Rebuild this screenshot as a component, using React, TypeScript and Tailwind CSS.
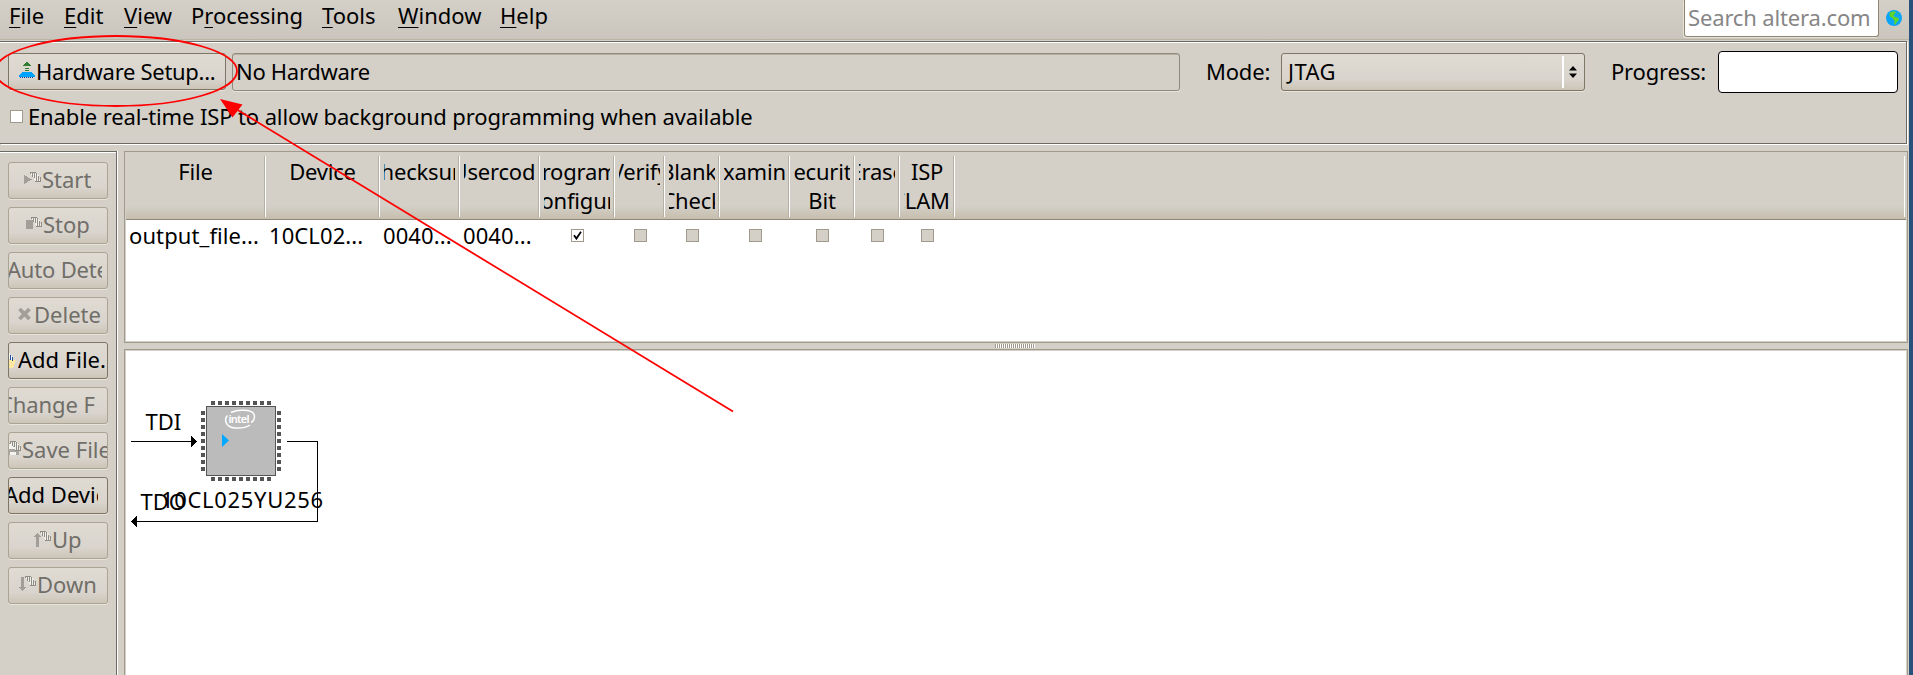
import type { ReactNode } from "react";

const face =
  "bg-linear-to-b from-[#dfdbd2] via-[#d9d4cd] via-70% to-[#ccc5b7]";

function Menu({ k, pre = "", post, w }: { k: string; pre?: string; post: string; w: string }) {
  return (
    <div className={`${w} shrink-0 whitespace-pre`}>
      {pre}
      <span className="underline decoration-1 underline-offset-3">{k}</span>
      {post}
    </div>
  );
}

const fingers = [
  [0, 0, 2],
  [1, 0, 1],
  [2, 1, 5],
  [4, 0, 6],
  [6, 1, 9],
  [8, 4, 9],
  [10, 5, 10],
];

function Hand({ x, y, color = "#8f8d86" }: { x: number; y: number; color?: string }) {
  return (
    <g transform={`translate(${x} ${y})`}>
      <path d="M0 0h6l3 4l1 6H5L4 5L0 2z" fill="#f1efea" />
      {fingers.map(([fx, a, b]) => (
        <rect key={fx} x={fx} y={a} width="1" height={b - a} fill={color} />
      ))}
      <rect x="5" y="9" width="6" height="1" fill={color} />
      <rect x="0" y="0" width="6" height="1" fill={color} />
    </g>
  );
}

function SideIcon({ w, children }: { w: number; children: ReactNode }) {
  return (
    <svg className="shrink-0" width={w} height="17" shapeRendering="crispEdges">
      {children}
    </svg>
  );
}

function SideButton({
  on = false,
  inner,
  icon,
  label,
  text = "",
}: {
  on?: boolean;
  inner: string;
  icon?: ReactNode;
  label: string;
  text?: string;
}) {
  return (
    <div
      className={`flex h-[37px] w-[100px] shrink-0 items-center overflow-hidden rounded-[3px] border pb-[3px] whitespace-nowrap ${face} ${
        on ? "border-[#7d7666] text-black" : "border-[#aaa495] text-[#706e69]"
      } shadow-[0_1px_0_#e8e4da]`}
    >
      <div className={`flex shrink-0 items-center ${inner}`}>
        {icon}
        <span className={`overflow-hidden ${text}`}>{label}</span>
      </div>
    </div>
  );
}

function Check({ state }: { state: "on" | "off" | "disabled" }) {
  return (
    <div
      className={`flex size-[13px] items-center justify-center border border-[#a09a8c] ${
        state === "disabled" ? "bg-[#d4d0c8]" : "bg-white"
      }`}
    >
      {state === "on" && (
        <svg width="9" height="9" viewBox="0 0 9 9" className="shrink-0">
          <path d="M1 4.2L3.4 7.6L8 0.8" fill="none" stroke="#000" strokeWidth="1.8" />
        </svg>
      )}
    </div>
  );
}

const columns: { w: string; lines: string[]; cell: string }[] = [
  { w: "w-[140px]", lines: ["File"], cell: "output_file..." },
  { w: "w-[114px]", lines: ["Device"], cell: "10CL02..." },
  { w: "w-[80px]", lines: ["Checksum"], cell: "0040..." },
  { w: "w-[80px]", lines: ["Usercode"], cell: "0040..." },
  { w: "w-[75px]", lines: ["Program/", "Configure"], cell: "on" },
  { w: "w-[50px]", lines: ["Verify"], cell: "disabled" },
  { w: "w-[55px]", lines: ["Blank-", "Check"], cell: "disabled" },
  { w: "w-[70px]", lines: ["Examine"], cell: "disabled" },
  { w: "w-[65px]", lines: ["Security", "Bit"], cell: "disabled" },
  { w: "w-[45px]", lines: ["Erase"], cell: "disabled" },
  { w: "w-[55px]", lines: ["ISP", "CLAMP"], cell: "disabled" },
];

const pins = [0, 7, 14, 21, 28, 35, 42, 49, 56];

function Chain() {
  return (
    <svg
      className="absolute left-0 top-0 font-['Noto_Sans',sans-serif]"
      width="220"
      height="200"
      viewBox="126 351 220 200"
      fontSize="22"
    >
      <g shapeRendering="crispEdges">
        <path d="M131 441h60v1h-60zM287 441h31v81H137v-1h180v-79h-30z" fill="#000" />
        <path d="M191 436l6 5.5l-6 5.5zM137 516l-6 5.5l6 5.5z" fill="#000" />
        <rect x="206.500" y="406.500" width="69" height="69" fill="#bbb" stroke="#555" />
        {pins.map((p) => (
          <g key={p} fill="#555">
            <rect x={211 + p} y="401" width="4" height="4" />
            <rect x={211 + p} y="477" width="4" height="4" />
            <rect x="201" y={411 + p} width="4" height="4" />
            <rect x="277" y={411 + p} width="4" height="4" />
          </g>
        ))}
      </g>
      <path d="M222 434l7 6.500l-7 6.500z" fill="#00a8ff" />
      <path
        d="M231 412.500C238 409 254 409 254.500 416C254.500 420 252 422 251 422.500M227.500 415.500C224 419 225 427 235 428C242 428.500 247 427 250 425"
        fill="none"
        stroke="#fff"
        strokeWidth="1.500"
      />
      <text x="228.500" y="423" fontSize="11" fontWeight="600" fill="#fff" textLength="21">
        intel
      </text>
      <text x="145.500" y="430">TDI</text>
      <text x="140.500" y="510">TDO</text>
      <text x="161" y="508" textLength="162">10CL025YU256</text>
    </svg>
  );
}

export default function App() {
  return (
    <div className="relative flex h-[675px] w-[1913px] overflow-hidden bg-[#d4d0c8] font-['Noto_Sans',sans-serif] text-[22px] leading-[28px] text-black">
      <div className="flex w-[1909px] flex-col">
        <div className="flex h-10 shrink-0 border-b border-[#b9b4a4] bg-linear-to-b from-[#d4d0c8] to-[#cac5bd] pl-[9px]">
          <div className="flex pt-px">
            <Menu k="F" post="ile" w="w-[55px]" />
            <Menu k="E" post="dit" w="w-[60px]" />
            <Menu k="V" post="iew" w="w-[67px]" />
            <Menu pre="P" k="r" post="ocessing" w="w-[131px]" />
            <Menu k="T" post="ools" w="w-[76px]" />
            <Menu k="W" post="indow" w="w-[102px]" />
            <Menu k="H" post="elp" w="w-[60px]" />
          </div>
          <div className="ml-auto flex h-[37px] w-[195px] items-start rounded-b-[3px] border border-t-0 border-[#8f8672] bg-white pt-[3px] pl-[3px] tracking-[-0.15px] text-[#868686] shadow-[-1px_1px_0_#e6e2d8]">
            <span>Search altera.com</span>
          </div>
          <svg className="mt-[10px] mr-[7px] ml-[7px]" width="16" height="16" viewBox="0 0 16 16">
            <circle cx="8" cy="8" r="8" fill="#0aa5f7" />
            <path
              d="M4.500 2L8 1.200L10.500 2L8.500 4L7.500 6L9.500 7L12.500 8L12.800 10L10.500 12.500L9.500 14.800L8.300 14L8.500 11L6.800 8.500L4 6.500L3.500 4zM11.500 2.500l1.500 1l-1 1z"
              fill="#5fd62b"
            />
          </svg>
        </div>
        <div className="mt-px flex h-[103px] w-[1907px] shrink-0 flex-col border-y border-r border-[#6b6963] shadow-[1px_1px_0_#fff,inset_0_1px_0_#fff]">
          <div className="flex h-[61px] shrink-0 items-start pl-2">
            <div
              className={`mt-[11px] flex h-[37px] w-[218px] shrink-0 items-center rounded-[3px] border border-[#7d7666] ${face} pb-[3px] pl-[10px] tracking-[-0.3px] whitespace-nowrap shadow-[0_1px_0_#e8e4da]`}
            >
              <svg className="mr-px shrink-0" width="16" height="16" shapeRendering="crispEdges">
                <path d="M7 0h2v1h1v1h1v1h1v1H4V3h1V2h1V1h1zM6 6h4v1H6zM6 8h4v1H6z" fill="#2f7d32" />
                <path d="M3 10h10v1h1v1h1v1h1v2H0v-2h1v-1h1v-1h1z" fill="#00a2ff" />
                <path d="M1 15h1v1H1zM3 15h1v1H3zM5 15h1v1H5zM7 15h1v1H7zM9 15h1v1H9zM11 15h1v1h-1zM13 15h1v1h-1z" fill="#0f3d91" />
              </svg>
              <span className="pt-px">Hardware Setup...</span>
            </div>
            <div className="mt-[11px] ml-[6px] flex h-[38px] w-[948px] shrink-0 items-center rounded-[3px] border border-[#8f8b7c] pb-[3px] pl-[3px] tracking-[-0.3px] shadow-[0_1px_0_#e8e4da,inset_0_1px_0_#b5b0a2]">
              <span>No Hardware</span>
            </div>
            <span className="mt-[15px] ml-[26px] w-[75px] shrink-0 tracking-[-0.2px]">Mode:</span>
            <div
              className={`mt-[11px] flex h-[38px] w-[304px] shrink-0 items-center rounded-[3px] border border-[#7d7666] ${face} pl-[6px] shadow-[0_1px_0_#e8e4da]`}
            >
              <span className="-mt-[3px] tracking-[0.4px]">JTAG</span>
              <div className="ml-auto flex h-8 w-[22px] items-center justify-center border-l-2 border-white pr-[2px]">
                <svg width="8" height="12" viewBox="0 0 8 12">
                  <path d="M0 4.500L4 0L8 4.500zM0 7.500L4 12L8 7.500z" fill="#000" />
                </svg>
              </div>
            </div>
            <span className="mt-[15px] ml-[26px] w-[107px] shrink-0 tracking-[-0.2px]">Progress:</span>
            <div className="mt-[9px] h-[42px] w-[180px] shrink-0 rounded-[4px] border border-black bg-white" />
          </div>
          <div className="flex items-start pl-[10px]">
            <div className="mt-[7px]">
              <Check state="off" />
            </div>
            <span className="-mt-px ml-[5px] tracking-[-0.12px]">
              Enable real-time ISP to allow background programming when available
            </span>
          </div>
        </div>
        <div className="flex flex-1 pt-[7px]">
          <div className="flex w-[117px] shrink-0 flex-col gap-2 border-t border-r border-[#6b6963] pt-[10px] pl-2 shadow-[1px_0_0_#fff,inset_0_1px_0_#fff]">
            <SideButton
              inner="pl-[15px]"
              label="Start"
              icon={
                <SideIcon w={18}>
                  <path d="M0 4l8 4.500L0 13z" fill="#a29f98" />
                  <Hand x={6} y={1} />
                </SideIcon>
              }
            />
            <SideButton
              inner="pl-[17px]"
              label="Stop"
              icon={
                <SideIcon w={17}>
                  <path d="M0 4h7v9H0z" fill="#a29f98" />
                  <Hand x={5} y={1} />
                </SideIcon>
              }
            />
            <SideButton inner="-ml-[2px]" label="Auto Detect" text="w-[95px] tracking-[-0.2px]" />
            <SideButton
              inner="pl-[9px]"
              label="Delete"
              icon={
                <svg className="mr-[3px] shrink-0" width="13" height="14" viewBox="0 0 13 14">
                  <path d="M1.500 2L11.500 12M11.500 2L1.500 12" stroke="#a29f98" strokeWidth="3.800" />
                </svg>
              }
            />
            <SideButton
              on
              inner="-ml-px"
              label="Add File..."
              icon={
                <SideIcon w={10}>
                  <path d="M0 9h8l-3 8H0z" fill="#ffe9a0" />
                  <path d="M0 2h1v6H0zM2 4h1v5H2zM4 6h1v4H4z" fill="#1d4fa0" />
                  <path d="M1 2h1v6H1zM3 5h1v4H3z" fill="#fff" />
                </SideIcon>
              }
            />
            <SideButton inner="-ml-[10px]" label="Change File..." text="w-[96px] tracking-[-0.1px]" />
            <SideButton
              inner="-ml-px"
              label="Save File"
              icon={
                <SideIcon w={14}>
                  <path d="M0 2h11v12H0z" fill="#a9a69f" />
                  <path d="M0 3h4l3 5H0zM2 11h6v3H2z" fill="#f4f3f0" />
                  <Hand x={2} y={0} />
                </SideIcon>
              }
            />
            <SideButton on inner="-ml-[5px]" label="Add Device..." text="w-[94px]" />
            <SideButton
              inner="pl-[25px]"
              label="Up"
              icon={
                <SideIcon w={18}>
                  <path d="M2 16V6H0L3.500 2L7 6H5v10z" fill="#a29f98" />
                  <Hand x={6} y={0} />
                </SideIcon>
              }
            />
            <SideButton
              inner="pl-[10px]"
              label="Down"
              icon={
                <SideIcon w={18}>
                  <path d="M2 1v10H0l3.500 4L7 11H5V1z" fill="#a29f98" />
                  <Hand x={6} y={0} />
                </SideIcon>
              }
            />
          </div>
          <div className="ml-[7px] flex w-[1784px] shrink-0 flex-col">
            <div className="h-[192px] shrink-0 border border-[#a09a8c] bg-[#d4d0c8] p-px">
              <div className="flex h-full flex-col bg-white">
                <div className="-mt-px flex h-[68px] shrink-0 border-b border-[#8f8676] bg-linear-to-b from-[#d4d0c8] from-80% to-[#c6bead] pt-[4px] pb-[2px] leading-[29px] tracking-[-0.2px]">
                  {columns.map((c) => (
                    <div
                      key={c.lines[0]}
                      className={`${c.w} shrink-0 border-r border-white pr-[4px] pl-1 shadow-[inset_-1px_0_0_#b5b0a4]`}
                    >
                      <div className="flex h-full flex-col items-center overflow-hidden pt-px">
                        {c.lines.map((l) => (
                          <span key={l}>{l}</span>
                        ))}
                      </div>
                    </div>
                  ))}
                  <div className="mr-px flex-1 border-r border-white" />
                </div>
                <div className="flex h-[32px] items-center">
                  {columns.map((c) => (
                    <div key={c.lines[0]} className={`${c.w} flex shrink-0 items-center pl-[3px]`}>
                      {c.cell === "on" || c.cell === "disabled" ? (
                        <div className="-mt-px flex w-full justify-center pr-[3px]">
                          <Check state={c.cell} />
                        </div>
                      ) : (
                        <span className="-mt-[2px] tracking-[0.1px]">{c.cell}</span>
                      )}
                    </div>
                  ))}
                </div>
              </div>
            </div>
            <div className="flex h-[6px] shrink-0 items-center justify-center">
              <svg width="40" height="4" className="mr-[2px]" shapeRendering="crispEdges">
                {Array.from({ length: 20 }, (_, i) => (
                  <g key={i}>
                    <rect x={i * 2} y="0" width="1" height="4" fill="#a09a8c" />
                    <rect x={i * 2 + 1} y="0" width="1" height="4" fill="#fff" />
                  </g>
                ))}
              </svg>
            </div>
            <div className="flex flex-1 border-x border-t border-[#a09a8c] px-px pt-px">
              <div className="relative flex-1 bg-white">
                <Chain />
              </div>
            </div>
          </div>
        </div>
      </div>
      <div className="flex-1 bg-[#25517a]" />
      <svg className="pointer-events-none absolute left-0 top-0" width="760" height="430">
        <ellipse cx="116" cy="71" rx="121" ry="35" fill="none" stroke="#f00" strokeWidth="1.800" />
        <path d="M236 109L733 411.500" stroke="#f00" strokeWidth="1.800" />
        <path d="M220 99L242.500 104.500L232.500 117.500z" fill="#f00" />
      </svg>
    </div>
  );
}
